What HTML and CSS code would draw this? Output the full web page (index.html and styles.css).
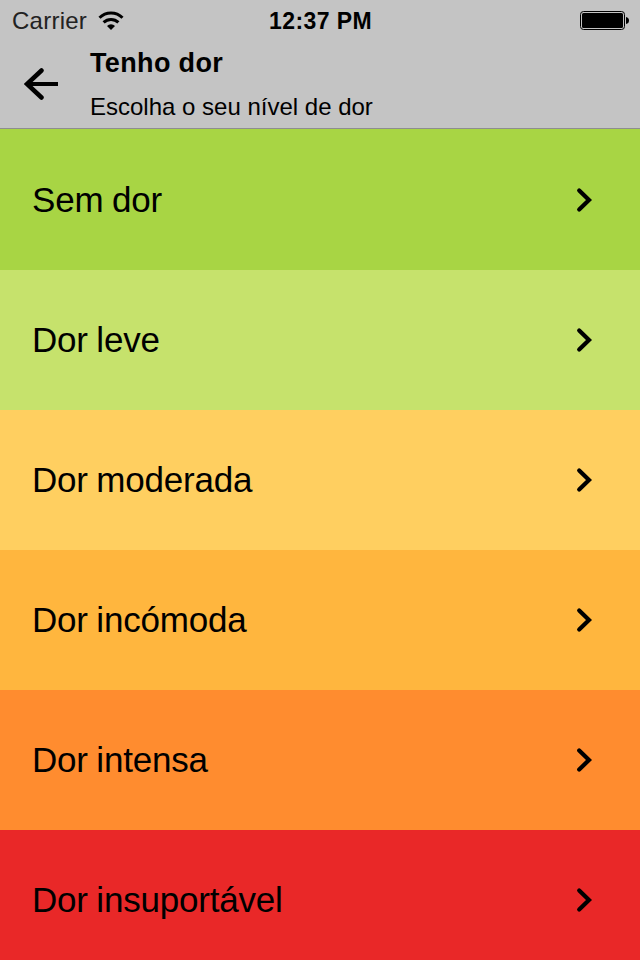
FILE: index.html
```html
<!DOCTYPE html>
<html lang="pt">
<head>
    <meta charset="UTF-8">
    <meta name="viewport" content="width=device-width, initial-scale=1.0">
    <title>Tenho dor</title>
    <link rel="stylesheet" href="styles.css">
</head>
<body>
    <header class="header">
        <div class="status-bar">
            <div class="carrier">
                <span>Carrier</span>
                <svg class="wifi" width="26" height="20" viewBox="0 0 26 20">
                    <path d="M1.5 6.8a16.3 16.3 0 0 1 23 0" />
                    <path d="M5.6 11.4a10.6 10.6 0 0 1 14.8 0" />
                    <path class="wifi-dot" d="M13 19l-4-4a5.7 5.7 0 0 1 8 0z" />
                </svg>
            </div>
            <div class="time">12:37 PM</div>
            <svg class="battery" width="50" height="20" viewBox="0 0 50 20">
                <rect x="1.5" y="0.5" width="44" height="18" rx="3" />
                <rect class="battery-fill" x="3" y="2" width="41" height="15" rx="1.5" />
                <path class="battery-fill" d="M47 6q3 .5 3 3.500t-3 3.500z" />
            </svg>
        </div>
        <div class="nav-bar">
            <svg class="back" width="36" height="35" viewBox="0 0 36 35">
                <path d="M17.500 3.500L3 17l14.500 13.500" />
                <path class="shaft" d="M3 17h31" />
            </svg>
            <div class="titles">
                <h1>Tenho dor</h1>
                <p>Escolha o seu nível de dor</p>
            </div>
        </div>
    </header>

    <ul class="pain-list">
        <li class="level-0">
            <span>Sem dor</span>
            <svg class="chevron" width="18" height="26" viewBox="0 0 18 26"><path d="M3.200 3.500L13 13 3.200 22.500" /></svg>
        </li>
        <li class="level-1">
            <span>Dor leve</span>
            <svg class="chevron" width="18" height="26" viewBox="0 0 18 26"><path d="M3.200 3.500L13 13 3.200 22.500" /></svg>
        </li>
        <li class="level-2">
            <span>Dor moderada</span>
            <svg class="chevron" width="18" height="26" viewBox="0 0 18 26"><path d="M3.200 3.500L13 13 3.200 22.500" /></svg>
        </li>
        <li class="level-3">
            <span>Dor incómoda</span>
            <svg class="chevron" width="18" height="26" viewBox="0 0 18 26"><path d="M3.200 3.500L13 13 3.200 22.500" /></svg>
        </li>
        <li class="level-4">
            <span>Dor intensa</span>
            <svg class="chevron" width="18" height="26" viewBox="0 0 18 26"><path d="M3.200 3.500L13 13 3.200 22.500" /></svg>
        </li>
        <li class="level-5">
            <span>Dor insuportável</span>
            <svg class="chevron" width="18" height="26" viewBox="0 0 18 26"><path d="M3.200 3.500L13 13 3.200 22.500" /></svg>
        </li>
    </ul>
</body>
</html>
```
FILE: styles.css
```css
* {
    box-sizing: border-box;
}
body {
    margin: 0;
    height: 960px;
    overflow: hidden;
    font-family: "Liberation Sans", Arial, sans-serif;
    color: #000;
}
.header {
    height: 129px;
    background-color: #c4c4c4;
    border-bottom: 1px solid #8e8e8e;
}
.status-bar {
    display: grid;
    grid-template-columns: 1fr auto 1fr;
    align-items: center;
    height: 41px;
    padding: 1px 11px 0 12px;
}
.carrier {
    display: flex;
    align-items: center;
    gap: 11px;
    font-size: 24px;
    letter-spacing: 0.25px;
    color: #222;
}
.wifi {
    fill: none;
    stroke: #000;
    stroke-width: 3;
}
.wifi .wifi-dot {
    fill: #000;
    stroke: none;
}
.time {
    font-size: 23px;
    font-weight: bold;
    letter-spacing: 0.4px;
}
.battery {
    justify-self: end;
    fill: none;
    stroke: #000;
}
.battery .battery-fill {
    fill: #000;
    stroke: none;
}
.nav-bar {
    display: flex;
    align-items: center;
    height: 87px;
    padding-left: 24px;
}
.back {
    margin-right: 30px;
    fill: none;
    stroke: #000;
    stroke-width: 4.5;
    stroke-linecap: round;
}
.back .shaft {
    stroke-width: 4;
    stroke-linecap: butt;
}
.titles h1 {
    margin: 0;
    font-size: 27px;
    line-height: 44px;
    letter-spacing: 0.35px;
}
.titles p {
    margin: 0;
    font-size: 24px;
    line-height: 44px;
}
.pain-list {
    margin: 0;
    padding: 0;
    list-style: none;
}
.pain-list li {
    display: flex;
    align-items: center;
    justify-content: space-between;
    height: 140px;
    padding: 0 46px 0 32px;
    font-size: 35px;
    letter-spacing: -0.2px;
    word-spacing: -1px;
}
.chevron {
    fill: none;
    stroke: #000;
    stroke-width: 4.2;
    stroke-linecap: round;
}
.pain-list .level-0 {
    height: 141px;
    padding-top: 1px;
    background-color: #a8d544;
}
.level-1 {
    background-color: #c6e26c;
}
.level-2 {
    background-color: #ffcf60;
}
.level-3 {
    background-color: #ffb63e;
}
.level-4 {
    background-color: #ff8c2f;
}
.level-5 {
    background-color: #e92828;
}
```
